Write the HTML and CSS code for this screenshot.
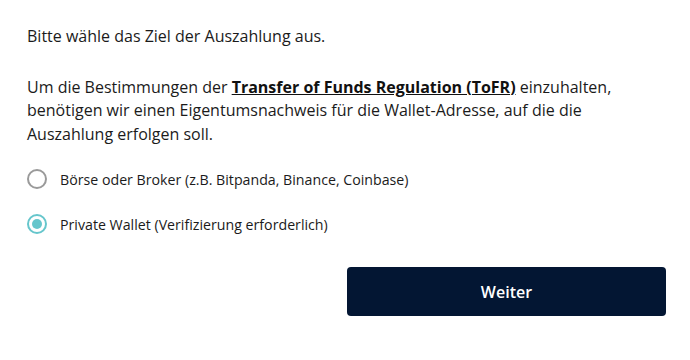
FILE: index.html
```html
<!DOCTYPE html>
<html lang="de">
<head>
    <meta charset="UTF-8">
    <meta name="viewport" content="width=device-width, initial-scale=1.0">
    <title>Auszahlung</title>
    <link rel="stylesheet" href="styles.css">
</head>
<body>
    <div class="panel">
        <p class="intro">Bitte wähle das Ziel der Auszahlung aus.</p>
        <p class="info">Um die Bestimmungen der <a href="#" class="link">Transfer of Funds Regulation (ToFR)</a> einzuhalten, benötigen wir einen Eigentumsnachweis für die Wallet-Adresse, auf die die Auszahlung erfolgen soll.</p>

        <div class="options">
            <label class="option">
                <input type="radio" name="target" value="exchange">
                <span class="radio"></span>
                <span class="option-text">Börse oder Broker (z.B. Bitpanda, Binance, Coinbase)</span>
            </label>
            <label class="option">
                <input type="radio" name="target" value="wallet" checked>
                <span class="radio"></span>
                <span class="option-text">Private Wallet (Verifizierung erforderlich)</span>
            </label>
        </div>

        <div class="actions">
            <button class="btn">Weiter</button>
        </div>
    </div>
</body>
</html>
```

FILE: styles.css
```css
body {
    margin: 0;
    background: #ffffff;
    color: #1b1b1b;
    font-family: "Open Sans", "Liberation Sans", sans-serif;
}
.panel {
    padding: 25px 24px 0 27px;
}
.intro, .info {
    margin: 0;
    font-size: 16px;
    line-height: 23.5px;
}
.info {
    margin-top: 27px;
}
.link {
    color: #111111;
    font-weight: 700;
    text-decoration: underline;
}
.options {
    display: flex;
    flex-direction: column;
    gap: 25px;
    margin-top: 23px;
}
.option {
    display: flex;
    align-items: center;
    gap: 13px;
    cursor: pointer;
    font-size: 14.2px;
}
.option input {
    display: none;
}
.radio {
    width: 16px;
    height: 16px;
    border: 2px solid #9a9a9a;
    border-radius: 50%;
    position: relative;
    flex-shrink: 0;
}
.option input:checked + .radio {
    border-color: #66c6cc;
}
.option input:checked + .radio::after {
    content: "";
    position: absolute;
    top: 3px;
    left: 3px;
    width: 10px;
    height: 10px;
    border-radius: 50%;
    background: #66c6cc;
}
.actions {
    display: flex;
    justify-content: flex-end;
    margin-top: 33px;
}
.btn {
    width: 319px;
    height: 49px;
    border: none;
    border-radius: 4px;
    background: #031633;
    color: #ffffff;
    font-family: "Open Sans", "Liberation Sans", sans-serif;
    font-size: 16px;
    font-weight: 600;
    cursor: pointer;
}
```
